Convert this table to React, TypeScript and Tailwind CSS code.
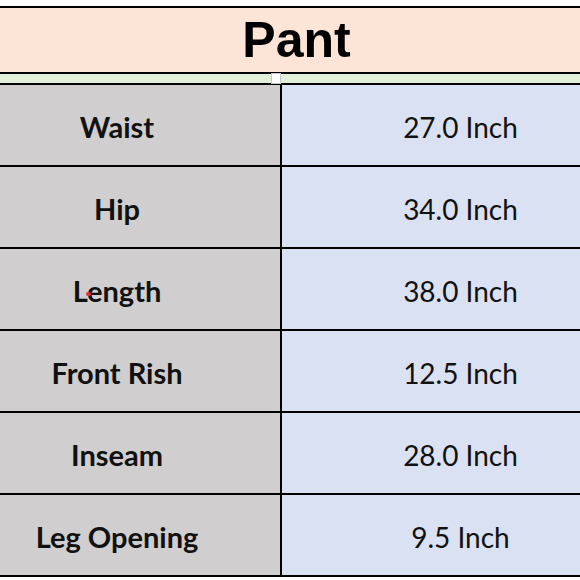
const rows = [
  { label: 'Waist', value: '27.0 Inch' },
  { label: 'Hip', value: '34.0 Inch' },
  { label: 'Length', value: '38.0 Inch' },
  { label: 'Front Rish', value: '12.5 Inch' },
  { label: 'Inseam', value: '28.0 Inch' },
  { label: 'Leg Opening', value: '9.5 Inch' },
];

export default function App() {
  return (
    <div className="h-[580px] w-[580px] overflow-hidden bg-white pt-[6px] font-['Lato',sans-serif] text-[#111]">
      <div className="-ml-[46px] w-[685px]">
        <div className="border-y-2 border-black">
          <div className="flex h-[64px] items-center justify-center bg-[#fce4d6]">
            <h1 className="font-['Liberation_Sans',Arial,sans-serif] text-[50px] font-bold leading-none text-black">
              Pant
            </h1>
          </div>
        </div>
        <div className="relative h-[9px] bg-[#e2efda]">
          <span className="absolute -top-[1px] left-[317px] h-[11px] w-[10px] border border-[#c8c8c8] bg-white" />
        </div>
        <div className="border-y-2 border-black">
          {rows.map((row, i) => (
            <div
              key={row.label}
              className={`flex h-[80px] ${i < rows.length - 1 ? 'box-content border-b-2 border-black' : ''}`}
            >
              <div className="relative flex w-[328px] items-center justify-center border-r-2 border-black bg-[#d0cece] pt-[4px] text-[29px] font-bold">
                {row.label}
                {row.label === 'Length' && (
                  <span className="absolute left-[132px] top-[43px] h-[4px] w-[5px] rounded-full bg-[#e0303a]" />
                )}
              </div>
              <div className="flex flex-1 items-center justify-center bg-[#d9e1f2] pt-[4px] text-[28px]">
                {row.value}
              </div>
            </div>
          ))}
        </div>
      </div>
    </div>
  );
}
